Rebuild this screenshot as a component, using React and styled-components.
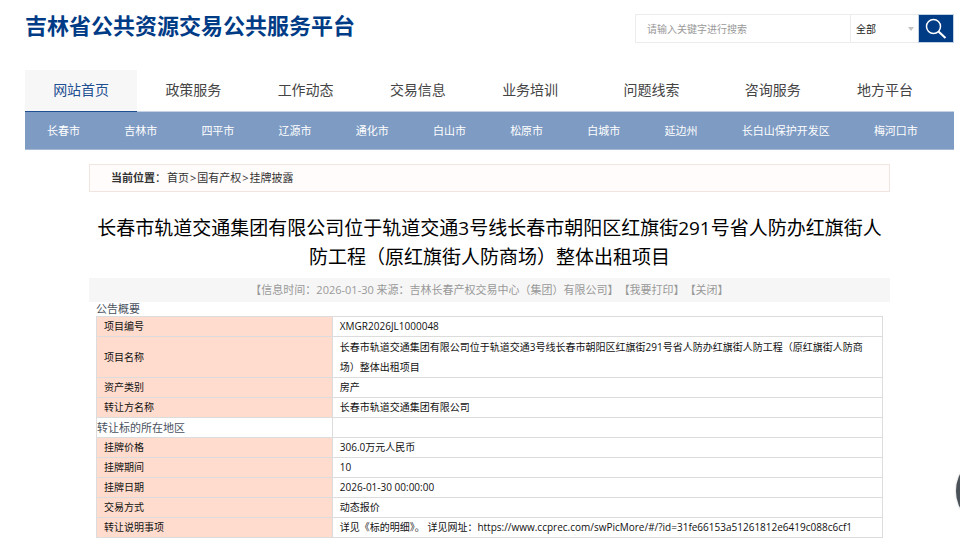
import React from 'react';
import styled, { createGlobalStyle } from 'styled-components';

const GlobalStyle = createGlobalStyle`
    * {
        box-sizing: border-box;
    }
    body {
        margin: 0;
        overflow: hidden;
        background: #fff;
        color: #333;
        font-family: "Open Sans", "Noto Sans CJK SC", sans-serif;
        font-size: 11px;
    }
    a {
        color: inherit;
        text-decoration: none;
    }
`

const Page = styled.div`
    padding: 0 6px 0 25px;
`

const Header = styled.header`
    display: flex;
    justify-content: space-between;
    align-items: flex-start;
    height: 70px;
`

const SiteName = styled.h1`
    margin: 9px 0 0;
    color: #003b86;
    font-size: 22px;
    font-weight: bold;
    line-height: 32px;
`

const SearchForm = styled.form`
    display: flex;
    height: 29px;
    margin-top: 14px;
`

const SearchInput = styled.input`
    width: 216px;
    padding: 0 11px;
    border: 1px solid #ececec;
    outline: 0;
    font-family: inherit;
    font-size: 10px;
    color: #333;
    &::placeholder {
        color: #999;
        opacity: 1;
    }
`

const SelectWrap = styled.div`
    position: relative;
    width: 67px;
    svg {
        position: absolute;
        right: 4px;
        top: 13px;
        pointer-events: none;
    }
`

const TypeSelect = styled.select`
    appearance: none;
    width: 100%;
    height: 100%;
    padding: 0 5px;
    border: solid #ececec;
    border-width: 1px 0;
    border-radius: 0;
    background: #fff;
    color: #222;
    font-family: inherit;
    font-size: 10px;
`

const SearchButton = styled.button`
    display: flex;
    justify-content: center;
    align-items: center;
    width: 36px;
    padding: 0;
    border: 1px solid #c3d0e2;
    background: #003b86;
`

const MainNav = styled.nav`
    display: flex;
    height: 42px;
    padding-right: 13px;
    border-bottom: 1px solid #c5d2e4;
`

const MainLink = styled.a`
    flex: ${props => props.$wide ? 130 : 112} 1 0;
    height: 42px;
    color: ${props => props.$active ? "#1d4f92" : "#444"};
    background: ${props => props.$active ? "#f7f7f7" : "transparent"};
    border-bottom: 1px solid ${props => props.$active ? "#1d4f92" : "transparent"};
    font-size: 14px;
    line-height: 40px;
    text-align: center;
`

const CityNav = styled.nav`
    display: flex;
    height: 38px;
    padding-right: 14px;
    background: #7e9bc3;
    border-bottom: 1px solid #a5b8d4;
`

const CityLink = styled.a`
    flex: auto;
    padding: 0 22px;
    color: #fff;
    line-height: 37px;
    white-space: nowrap;
`

const Content = styled.main`
    margin: 14px 64px 0;
`

const Breadcrumb = styled.div`
    display: flex;
    gap: 1px;
    height: 28px;
    padding: 0 21px;
    background: #fffcfb;
    border: 1px solid #f2e4df;
    line-height: 26px;
`

const Title = styled.h2`
    margin: 22px 0 6px;
    color: #000;
    font-size: 19px;
    font-weight: normal;
    line-height: 29px;
    text-align: center;
`

const Meta = styled.div`
    display: flex;
    justify-content: center;
    height: 24px;
    background: #f6f6f6;
    color: #999;
    line-height: 24px;
`

const TableWrap = styled.div`
    padding: 0 7px;
`

const InfoTable = styled.table`
    width: 100%;
    border-collapse: collapse;
    table-layout: fixed;
    caption {
        height: 14px;
        color: #4a5260;
        line-height: 14px;
        text-align: left;
    }
`

const Label = styled.th`
    width: 30%;
    padding: 0 7px;
    border: 1px solid #dcdcdc;
    background: #ffdccd;
    color: #111;
    font-size: 10px;
    font-weight: normal;
    line-height: 19px;
    text-align: left;
`

const PlainLabel = styled(Label)`
    padding: 0;
    background: transparent;
    color: #4a5260;
    font-size: 11px;
`

const Value = styled.td`
    padding: 0 7px;
    border: 1px solid #dcdcdc;
    color: #111;
    font-size: 10px;
    line-height: ${props => props.$multi ? 20 : 19}px;
`

const FloatButton = styled.button`
    position: fixed;
    right: -72px;
    top: 453px;
    width: 76px;
    height: 76px;
    border: 0;
    border-radius: 50%;
    background: #4a5159;
    box-shadow: 0 0 2px rgba(0, 0, 0, 0.3);
`

const navItems = ['网站首页', '政策服务', '工作动态', '交易信息', '业务培训', '问题线索', '咨询服务', '地方平台'];

const cities = ['长春市', '吉林市', '四平市', '辽源市', '通化市', '白山市', '松原市', '白城市', '延边州', '长白山保护开发区', '梅河口市'];

const projectName = '长春市轨道交通集团有限公司位于轨道交通3号线长春市朝阳区红旗街291号省人防办红旗街人防工程（原红旗街人防商场）整体出租项目';

const rows = [
    { label: '项目编号', value: 'XMGR2026JL1000048' },
    { label: '项目名称', value: projectName, multi: true },
    { label: '资产类别', value: '房产' },
    { label: '转让方名称', value: '长春市轨道交通集团有限公司' },
    { label: '转让标的所在地区', value: '', plain: true },
    { label: '挂牌价格', value: '306.0万元人民币' },
    { label: '挂牌期间', value: '10' },
    { label: '挂牌日期', value: '2026-01-30 00:00:00' },
    { label: '交易方式', value: '动态报价' },
    { label: '转让说明事项', value: '详见《标的明细》。 详见网址：https://www.ccprec.com/swPicMore/#/?id=31fe66153a51261812e6419c088c6cf1' },
];

const Search = () => (
    <SearchForm onSubmit={e => e.preventDefault()}>
        <SearchInput type="text" aria-label="关键字" placeholder="请输入关键字进行搜索" />
        <SelectWrap>
            <TypeSelect aria-label="分类">
                <option>全部</option>
            </TypeSelect>
            <svg width="6" height="4" viewBox="0 0 6 4"><path d="M0 0h6L3 4z" fill="#c4c4c4" /></svg>
        </SelectWrap>
        <SearchButton type="submit" aria-label="搜索">
            <svg width="22" height="22" viewBox="0 0 22 22" fill="none" stroke="#fff">
                <circle cx="8.5" cy="8.5" r="7" strokeWidth="1.5" />
                <path d="M13.5 13.5l7 6.5" strokeWidth="2.2" />
            </svg>
        </SearchButton>
    </SearchForm>
)

const InfoRow = ({ label, value, plain, multi }) => {
    const Head = plain ? PlainLabel : Label;
    return (
        <tr>
            <Head scope="row">{label}</Head>
            <Value $multi={multi}>{value}</Value>
        </tr>
    )
}

export default function App() {
    return (
        <>
            <GlobalStyle />
            <Page>
                <Header>
                    <SiteName>吉林省公共资源交易公共服务平台</SiteName>
                    <Search />
                </Header>
                <MainNav>
                    {navItems.map((name, i) => (
                        <MainLink key={name} href="#" $active={i === 0} $wide={name === '问题线索'}>{name}</MainLink>
                    ))}
                </MainNav>
                <CityNav>
                    {cities.map(city => <CityLink key={city} href="#">{city}</CityLink>)}
                </CityNav>
                <Content>
                    <Breadcrumb>
                        <span><b>当前位置</b>：</span>
                        <a href="#">首页</a>
                        <span>&gt;</span>
                        <a href="#">国有产权</a>
                        <span>&gt;</span>
                        <a href="#">挂牌披露</a>
                    </Breadcrumb>
                    <Title>{projectName}</Title>
                    <Meta>
                        <span>【信息时间：2026-01-30 来源：吉林长春产权交易中心（集团）有限公司】</span>
                        <a href="#">【我要打印】</a>
                        <a href="#">【关闭】</a>
                    </Meta>
                    <TableWrap>
                        <InfoTable>
                            <caption>公告概要</caption>
                            <tbody>
                                {rows.map(row => <InfoRow key={row.label} {...row} />)}
                            </tbody>
                        </InfoTable>
                    </TableWrap>
                </Content>
            </Page>
            <FloatButton aria-label="更多" />
        </>
    )
}
